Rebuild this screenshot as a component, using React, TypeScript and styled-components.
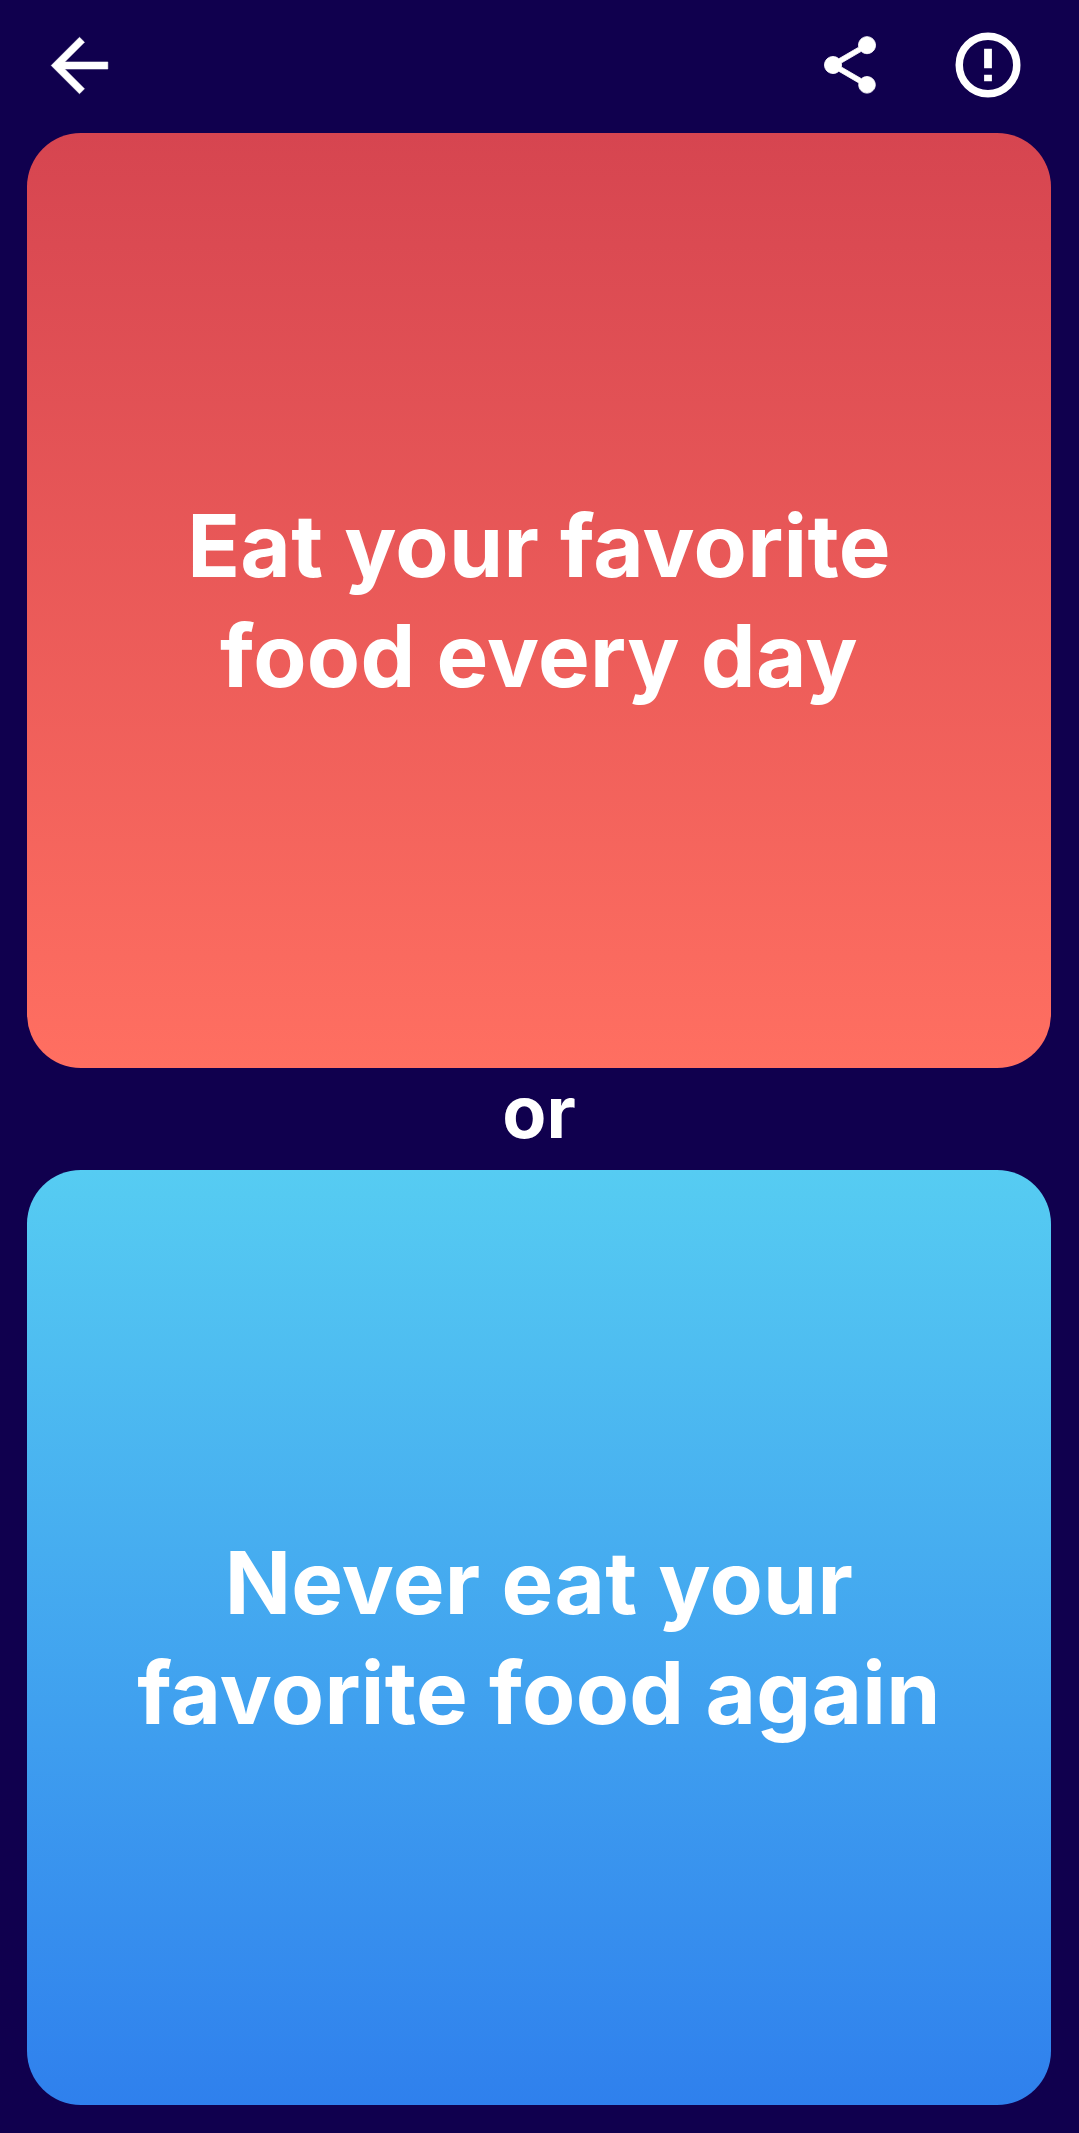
import React from "react";
import styled, { createGlobalStyle } from "styled-components";

const GlobalStyle = createGlobalStyle`
  html, body {
    margin: 0;
    padding: 0;
    background: #10004e;
  }
`;

const Screen = styled.div`
  width: 1079px;
  height: 2133px;
  box-sizing: border-box;
  padding: 0 28px 28px 27px;
  display: flex;
  flex-direction: column;
  background: #10004e;
  font-family: "Inter", "Open Sans", sans-serif;
  color: #fff;
`;

const Toolbar = styled.header`
  height: 133px;
  box-sizing: border-box;
  padding-bottom: 3px;
  flex: none;
  display: flex;
  align-items: center;
  justify-content: space-between;
`;

const BackButton = styled.svg`
  width: 85px;
  height: 85px;
  margin-left: 10px;
  fill: #fff;
  stroke: #fff;
  stroke-width: 0.15;
`;

const Actions = styled.div`
  display: flex;
  align-items: center;
  gap: 65px;
  margin-right: 24px;
`;

const ShareIcon = styled.svg`
  width: 68px;
  height: 68px;
  fill: #fff;
  stroke: #fff;
  stroke-width: 0.3;
`;

const ReportIcon = styled.svg`
  width: 78px;
  height: 78px;
  fill: #fff;
`;

const ReportRing = styled.circle`
  fill: none;
  stroke: #fff;
  stroke-width: 2.3;
`;

const Card = styled.button<{ $from: string; $to: string }>`
  flex: none;
  height: 935px;
  width: 100%;
  border: 0;
  padding: 0 20px;
  border-radius: 54px;
  display: flex;
  align-items: center;
  justify-content: center;
  background: linear-gradient(180deg, ${(p) => p.$from}, ${(p) => p.$to});
  font: inherit;
  color: inherit;
`;

const CardText = styled.span`
  font-size: 87px;
  font-weight: 700;
  letter-spacing: 0.3px;
  line-height: 110px;
  text-align: center;
`;

const Divider = styled.div`
  height: 102px;
  box-sizing: border-box;
  padding-bottom: 16px;
  flex: none;
  display: flex;
  align-items: center;
  justify-content: center;
  font-size: 72px;
  font-weight: 700;
`;

export default function App() {
  return (
    <>
      <GlobalStyle />
      <Screen>
        <Toolbar>
          <BackButton viewBox="0 0 24 24">
            <path d="M20 11H7.83l5.59-5.59L12 4l-8 8 8 8 1.41-1.41L7.83 13H20v-2z" />
          </BackButton>
          <Actions>
            <ShareIcon viewBox="0 0 24 24">
              <path d="M18 16.08c-.76 0-1.44.3-1.96.77L8.91 12.7c.05-.23.09-.46.09-.7s-.04-.47-.09-.7l7.05-4.11c.54.5 1.25.81 2.04.81 1.66 0 3-1.34 3-3s-1.34-3-3-3-3 1.34-3 3c0 .24.04.47.09.7L8.04 9.81C7.5 9.31 6.79 9 6 9c-1.66 0-3 1.34-3 3s1.34 3 3 3c.79 0 1.5-.31 2.04-.81l7.12 4.16c-.05.21-.08.43-.08.65 0 1.61 1.31 2.92 2.92 2.92 1.61 0 2.92-1.31 2.92-2.92s-1.31-2.92-2.92-2.92z" />
            </ShareIcon>
            <ReportIcon viewBox="0 0 24 24">
              <ReportRing cx="12" cy="12" r="8.85" />
              <rect x="10.8" y="7" width="2.4" height="6" />
              <rect x="10.8" y="15" width="2.4" height="2" />
            </ReportIcon>
          </Actions>
        </Toolbar>
        <Card $from="#d64550" $to="#ff6f61">
          <CardText>
            Eat your favorite
            <br />
            food every day
          </CardText>
        </Card>
        <Divider>or</Divider>
        <Card $from="#56ccf2" $to="#2f80ed">
          <CardText>
            Never eat your
            <br />
            favorite food again
          </CardText>
        </Card>
      </Screen>
    </>
  );
}
